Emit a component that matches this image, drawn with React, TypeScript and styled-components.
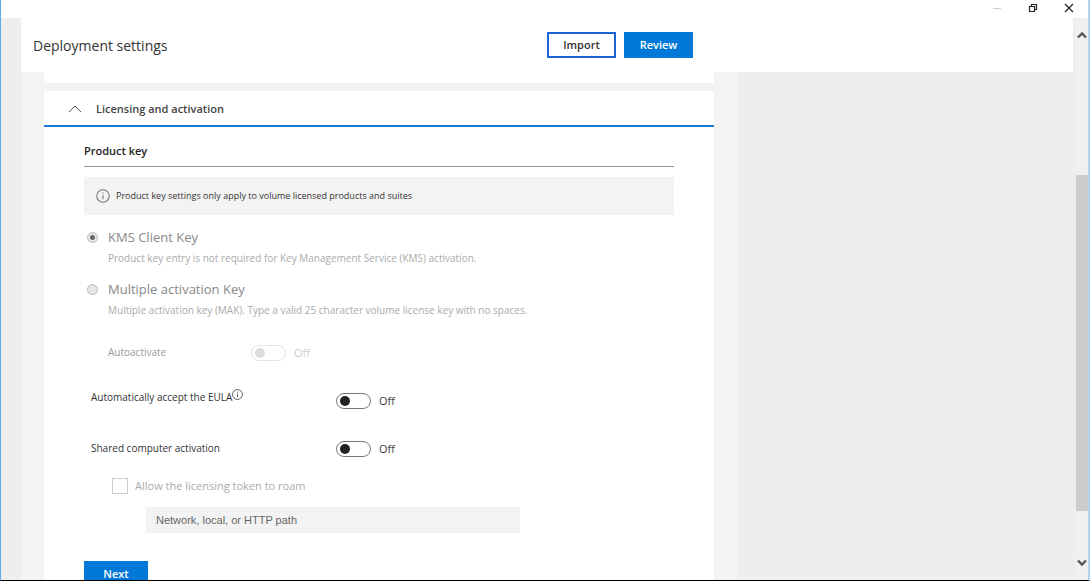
import React, { useState } from "react";
import styled, { createGlobalStyle } from "styled-components";

const GlobalStyle = createGlobalStyle`
  *, *::before, *::after { box-sizing: border-box; }
  body {
    margin: 0;
    font-family: "Segoe UI", "Open Sans", sans-serif;
    font-size: 10px;
    line-height: 16px;
    color: #333;
    background: #fff;
  }
  h1, h2, h3, p { margin: 0; }
  button, input { font-family: inherit; margin: 0; }
`;

const Window = styled.div`
  display: flex;
  flex-direction: column;
  height: 100vh;
  border-left: 1px solid #5ea9e6;
  border-right: 2px solid #b4d3ea;
  border-bottom: 1px solid #000;
  overflow: hidden;
`;

const TitleBar = styled.div`
  display: flex;
  justify-content: flex-end;
  flex: none;
  height: 18px;
  padding-right: 1px;
`;

const WindowButton = styled.button<{ $muted?: boolean }>`
  display: flex;
  align-items: center;
  justify-content: center;
  width: 36px;
  height: 16px;
  padding: 0;
  border: 0;
  background: none;
  color: ${(p) => (p.$muted ? "#ccc" : "#222")};
`;

const Frame = styled.div`
  display: flex;
  flex: 1;
  min-height: 0;
`;

const Gutter = styled.div`
  flex: none;
  width: 20px;
  background: #eee;
`;

const Main = styled.main`
  display: flex;
  flex-direction: column;
  flex: 1;
  min-width: 0;
  background: #eee;
`;

const Header = styled.header`
  flex: none;
  height: 54px;
  margin-right: 3px;
  background: #fff;
`;

const HeaderContent = styled.div`
  display: flex;
  align-items: center;
  gap: 8px;
  height: 100%;
  max-width: 672px;
  padding-left: 12px;
`;

const PageTitle = styled.h1`
  flex: 1;
  padding-top: 2px;
  font-size: 14px;
  font-weight: 400;
  line-height: 20px;
`;

const Button = styled.button<{ $primary?: boolean; $width: number }>`
  width: ${(p) => p.$width}px;
  height: 26px;
  padding: 0;
  border: 2px solid ${(p) => (p.$primary ? "#0078d7" : "#1a66d9")};
  background: ${(p) => (p.$primary ? "#0078d7" : "#fff")};
  color: ${(p) => (p.$primary ? "#fff" : "#333")};
  font-size: 11px;
  font-weight: 600;
  line-height: 16px;
`;

const Scroller = styled.div`
  flex: 1;
  min-height: 0;
  overflow: hidden;
`;

const Page = styled.div`
  display: flex;
  flex-direction: column;
  gap: 8px;
  max-width: 716px;
  min-height: 100%;
  padding: 0 23px;
  background: #f3f3f3;
`;

const PreviousCard = styled.section`
  height: 11px;
  background: #fff;
`;

const Card = styled.section`
  flex: 1;
  background: #fff;
`;

const CardToggle = styled.button`
  display: flex;
  align-items: center;
  gap: 14px;
  width: 100%;
  height: 36px;
  padding: 2px 24px 0;
  border: 0;
  border-bottom: 2px solid #1a7ad4;
  background: none;
  color: #444;
  font-size: 11px;
  font-weight: 600;
  line-height: 16px;
`;

const CardBody = styled.div`
  padding: 16px 40px 24px;
`;

const SectionTitle = styled.h3`
  padding-bottom: 7px;
  border-bottom: 1px solid #999;
  color: #222;
  font-size: 11px;
  font-weight: 600;
`;

const Notice = styled.p`
  display: flex;
  align-items: center;
  gap: 6px;
  height: 38px;
  margin: 10px 0 12px;
  padding: 0 12px;
  background: #f3f3f3;
  font-size: 9px;
`;

const Option = styled.div`
  display: grid;
  grid-template-columns: 11px 1fr;
  column-gap: 10px;
  align-items: center;
  margin-bottom: 10px;
  padding-left: 3px;
`;

const OptionLabel = styled.label`
  color: #888;
  font-size: 13px;
  line-height: 20px;
`;

const OptionHint = styled.p`
  grid-column: 2;
  padding: 3px 0;
  color: #aaa;
`;

const Radio = styled.input`
  appearance: none;
  width: 11px;
  height: 11px;
  border: 1px solid #bbb;
  border-radius: 50%;
  background: #e6e6e6;
  &:checked {
    background: radial-gradient(circle, #666 0 2px, #e6e6e6 3px);
  }
`;

const SettingRow = styled.div<{ $labelWidth: number; $indent: number }>`
  display: grid;
  grid-template-columns: ${(p) => p.$labelWidth}px auto;
  grid-template-rows: 16px;
  align-items: center;
  padding-left: ${(p) => p.$indent}px;
`;

const Settings = styled.div`
  display: flex;
  flex-direction: column;
  gap: 32px;
  padding-top: 14px;
`;

const SettingLabel = styled.label<{ $muted?: boolean; $raised?: boolean }>`
  display: flex;
  align-self: ${(p) => (p.$raised ? "end" : "center")};
  padding-bottom: ${(p) => (p.$raised ? 4 : 2)}px;
  color: ${(p) => (p.$muted ? "#999" : "#333")};
`;

const SwitchGroup = styled.span`
  display: flex;
  align-items: center;
  gap: 8px;
`;

const SwitchInput = styled.input`
  display: flex;
  align-items: center;
  appearance: none;
  width: 35px;
  height: 16px;
  padding: 0 3px;
  border: 1px solid #777;
  border-radius: 8px;
  background: #fff;
  &::before {
    content: "";
    width: 10px;
    height: 10px;
    border-radius: 50%;
    background: #222;
  }
  &:checked { justify-content: flex-end; }
  &:disabled { border-color: #e3e3e3; }
  &:disabled::before { background: #ddd; }
`;

const SwitchState = styled.span<{ $muted?: boolean }>`
  color: ${(p) => (p.$muted ? "#ccc" : "#444")};
  font-size: 11px;
`;

const RoamLabel = styled.label`
  display: flex;
  align-items: center;
  gap: 7px;
  margin-top: 21px;
  padding-left: 28px;
  color: #aaa;
  font-size: 11px;
`;

const Checkbox = styled.input`
  appearance: none;
  width: 16px;
  height: 16px;
  border: 1px solid #ccc;
  background: #fff;
`;

const PathInput = styled.input`
  display: block;
  width: 374px;
  max-width: calc(100% - 62px);
  height: 26px;
  margin: 13px 0 28px 62px;
  padding: 0 10px;
  border: 0;
  background: #f3f3f3;
  && { font-family: Arial, "Liberation Sans", sans-serif; }
  font-size: 11px;
  &::placeholder { color: #666; opacity: 1; }
`;

const ScrollBar = styled.div`
  display: flex;
  flex-direction: column;
  flex: none;
  width: 12px;
  background: #f0f0f0;
`;

const ScrollButton = styled.button`
  display: flex;
  align-items: center;
  justify-content: center;
  height: 34px;
  padding: 0;
  border: 0;
  background: none;
`;

const Track = styled.div`
  display: flex;
  flex-direction: column;
  flex: 1;
  &::before { content: ""; flex: 123; }
  &::after { content: ""; flex: 35; }
`;

const Thumb = styled.div`
  flex: 335;
  background: #cdcdcd;
`;

const InfoIcon = ({ size, color }: { size: number; color: string }) => (
  <svg width={size} height={size} viewBox="0 0 13 13" fill="none" stroke={color} aria-hidden="true">
    <circle cx="6.5" cy="6.5" r="5.8" />
    <path d="M6.5 5.5v4M6.5 3.3v1.2" />
  </svg>
);

const Chevron = ({ down }: { down?: boolean }) => (
  <svg width="10" height="8" viewBox="0 0 10 8" fill="none" stroke="#555" strokeWidth="2.4" aria-hidden="true">
    <path d={down ? "M1 1.5l4 4 4-4" : "M1 6.5l4-4 4 4"} />
  </svg>
);

type SwitchProps = { id: string; disabled?: boolean };

const Switch = ({ id, disabled }: SwitchProps) => {
  const [on, setOn] = useState(false);
  return (
    <SwitchGroup>
      <SwitchInput
        id={id}
        type="checkbox"
        role="switch"
        disabled={disabled}
        checked={on}
        onChange={(e) => setOn(e.target.checked)}
      />
      <SwitchState $muted={disabled}>{on ? "On" : "Off"}</SwitchState>
    </SwitchGroup>
  );
};

export default function App() {
  return (
    <>
      <GlobalStyle />
      <Window>
        <TitleBar>
          <WindowButton $muted aria-label="Minimize">
            <svg width="10" height="10" viewBox="0 0 10 10" stroke="currentColor">
              <path d="M1 5.5h8" />
            </svg>
          </WindowButton>
          <WindowButton aria-label="Restore">
            <svg width="10" height="10" viewBox="0 0 10 10" fill="none" stroke="currentColor" strokeWidth="1.2">
              <path d="M1.5 3.5h5v5h-5zM3.5 3.5v-2h5v5h-2" />
            </svg>
          </WindowButton>
          <WindowButton aria-label="Close">
            <svg width="10" height="10" viewBox="0 0 10 10" stroke="currentColor" strokeWidth="1.2">
              <path d="M1 1l8 8M9 1l-8 8" />
            </svg>
          </WindowButton>
        </TitleBar>
        <Frame>
          <Gutter />
          <Main>
            <Header>
              <HeaderContent>
                <PageTitle>Deployment settings</PageTitle>
                <Button $width={69}>Import</Button>
                <Button $primary $width={69}>Review</Button>
              </HeaderContent>
            </Header>
            <Scroller>
              <Page>
                <PreviousCard />
                <Card>
                  <h2>
                    <CardToggle aria-expanded="true">
                      <svg width="14" height="8" viewBox="0 0 14 8" fill="none" stroke="#555" aria-hidden="true">
                        <path d="M1 7l6-6 6 6" />
                      </svg>
                      Licensing and activation
                    </CardToggle>
                  </h2>
                  <CardBody>
                    <SectionTitle>Product key</SectionTitle>
                    <Notice>
                      <InfoIcon size={14} color="#777" />
                      Product key settings only apply to volume licensed products and suites
                    </Notice>
                    <Option>
                      <Radio id="kms" type="radio" name="key" defaultChecked disabled />
                      <OptionLabel htmlFor="kms">KMS Client Key</OptionLabel>
                      <OptionHint>
                        Product key entry is not required for Key Management Service (KMS) activation.
                      </OptionHint>
                    </Option>
                    <Option>
                      <Radio id="mak" type="radio" name="key" disabled />
                      <OptionLabel htmlFor="mak">Multiple activation Key</OptionLabel>
                      <OptionHint>
                        Multiple activation key (MAK). Type a valid 25 character volume license key with no spaces.
                      </OptionHint>
                    </Option>
                    <Settings>
                      <SettingRow $indent={24} $labelWidth={143}>
                        <SettingLabel $muted htmlFor="autoactivate">Autoactivate</SettingLabel>
                        <Switch id="autoactivate" disabled />
                      </SettingRow>
                      <SettingRow $indent={7} $labelWidth={245}>
                        <SettingLabel $raised htmlFor="eula">
                          Automatically accept the EULA
                          <InfoIcon size={11} color="#444" />
                        </SettingLabel>
                        <Switch id="eula" />
                      </SettingRow>
                      <SettingRow $indent={7} $labelWidth={245}>
                        <SettingLabel htmlFor="shared">Shared computer activation</SettingLabel>
                        <Switch id="shared" />
                      </SettingRow>
                    </Settings>
                    <RoamLabel>
                      <Checkbox type="checkbox" disabled />
                      Allow the licensing token to roam
                    </RoamLabel>
                    <PathInput aria-label="Path" placeholder="Network, local, or HTTP path" />
                    <Button $primary $width={64}>Next</Button>
                  </CardBody>
                </Card>
              </Page>
            </Scroller>
          </Main>
          <ScrollBar>
            <ScrollButton aria-label="Scroll up"><Chevron /></ScrollButton>
            <Track><Thumb /></Track>
            <ScrollButton aria-label="Scroll down"><Chevron down /></ScrollButton>
          </ScrollBar>
        </Frame>
      </Window>
    </>
  );
}
